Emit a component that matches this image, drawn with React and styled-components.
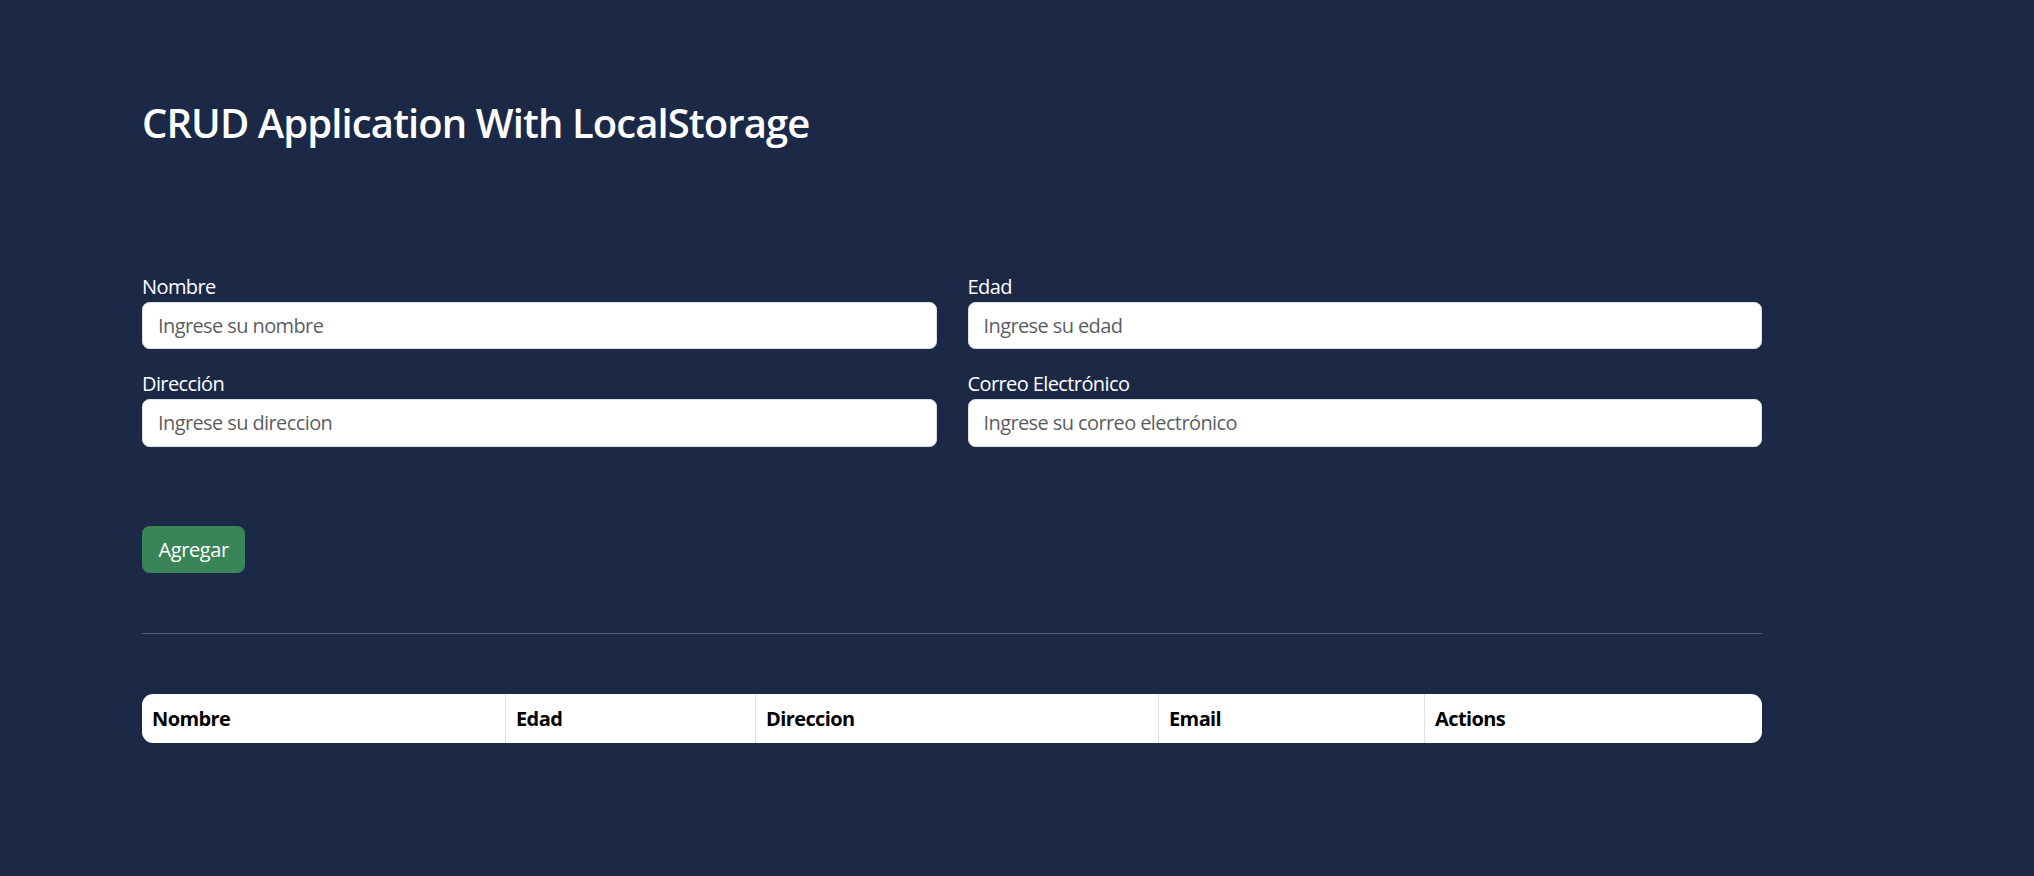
import React from "react";
import styled, { createGlobalStyle } from "styled-components";

const GlobalStyle = createGlobalStyle`
  html, body {
    margin: 0;
    padding: 0;
    background: #1c2946;
  }
  body {
    font-family: "Segoe UI", "Open Sans", "Noto Sans", sans-serif;
    color: #fff;
    letter-spacing: -0.6px;
  }
  * {
    box-sizing: border-box;
  }
`;

const Page = styled.div`
  min-height: 876px;
  padding: 99px 0 0 142px;
`;

const Container = styled.div`
  width: 1620px;
`;

const Title = styled.h2`
  margin: 0 0 124.5px;
  font-size: 40px;
  line-height: 48px;
  font-weight: 600;
  letter-spacing: -0.9px;
  color: #fff;
`;

const FormGrid = styled.div`
  display: grid;
  grid-template-columns: 1fr 1fr;
  column-gap: 31px;
  row-gap: 20px;
`;

const Field = styled.div`
  display: flex;
  flex-direction: column;
`;

const Label = styled.label`
  font-size: 20px;
  line-height: 30px;
  color: #fff;
`;

const Input = styled.input`
  height: 47.5px;
  padding: 0 15px;
  font-family: inherit;
  font-size: 20px;
  letter-spacing: inherit;
  color: #212529;
  background: #fff;
  border: 1.25px solid #dee2e6;
  border-radius: 7.5px;
  outline: none;
  &::placeholder {
    color: rgba(33, 37, 41, 0.75);
  }
`;

const Button = styled.button`
  margin-top: 79px;
  height: 47.5px;
  padding: 0 15.5px;
  font-family: inherit;
  font-size: 20px;
  letter-spacing: -0.4px;
  color: #fff;
  background: #398557;
  border: 1.25px solid #398557;
  border-radius: 7.5px;
  cursor: pointer;
`;

const Divider = styled.hr`
  margin: 60px 0 60px;
  border: 0;
  border-top: 1.25px solid #555f74;
`;

const Table = styled.table`
  width: 100%;
  border-collapse: separate;
  border-spacing: 0;
  background: #fff;
  border-radius: 11px;
  overflow: hidden;
  table-layout: fixed;
`;

const Th = styled.th`
  width: ${(p) => p.$w}px;
  padding: 9.5px 10px;
  font-size: 20px;
  line-height: 30px;
  font-weight: 700;
  text-align: left;
  color: #000;
  border-left: ${(p) => (p.$first ? "none" : "1.25px solid #dee2e6")};
`;

const fields = [
  { label: "Nombre", placeholder: "Ingrese su nombre" },
  { label: "Edad", placeholder: "Ingrese su edad" },
  { label: "Dirección", placeholder: "Ingrese su direccion" },
  { label: "Correo Electrónico", placeholder: "Ingrese su correo electrónico" },
];

const columns = [
  { name: "Nombre", w: 363 },
  { name: "Edad", w: 250 },
  { name: "Direccion", w: 403 },
  { name: "Email", w: 266 },
  { name: "Actions", w: 338 },
];

export default function App() {
  return (
    <>
      <GlobalStyle />
      <Page>
        <Container>
          <Title>CRUD Application With LocalStorage</Title>

          <FormGrid>
            {fields.map((f) => (
              <Field key={f.label}>
                <Label>{f.label}</Label>
                <Input placeholder={f.placeholder} />
              </Field>
            ))}
          </FormGrid>

          <Button>Agregar</Button>

          <Divider />

          <Table>
            <thead>
              <tr>
                {columns.map((c, i) => (
                  <Th key={c.name} $w={c.w} $first={i === 0}>
                    {c.name}
                  </Th>
                ))}
              </tr>
            </thead>
          </Table>
        </Container>
      </Page>
    </>
  );
}
